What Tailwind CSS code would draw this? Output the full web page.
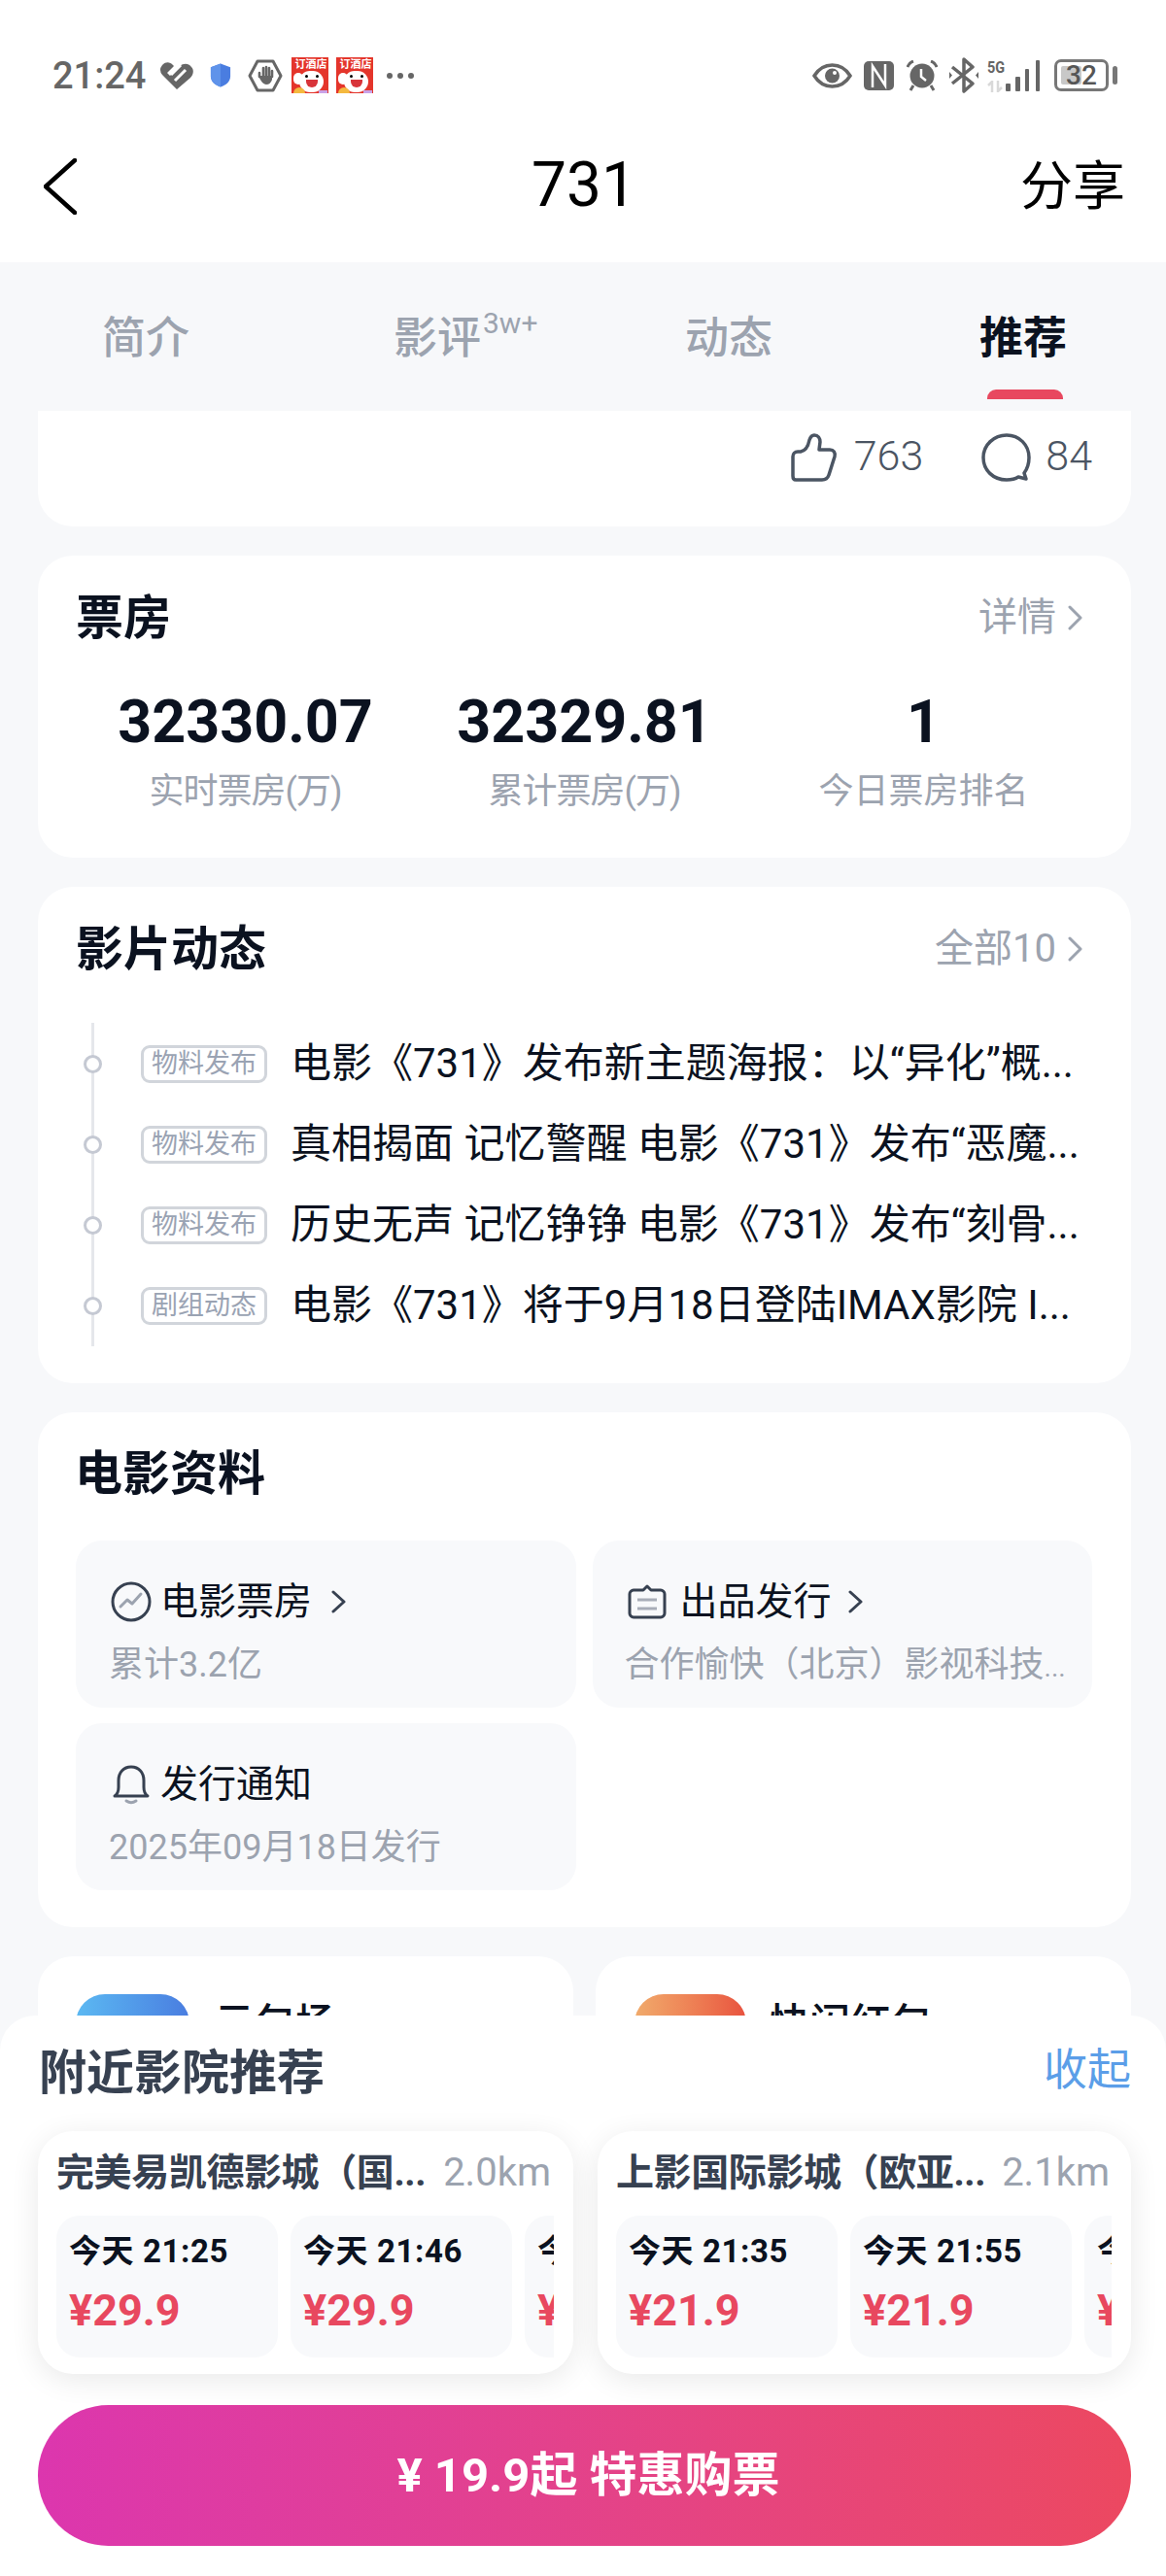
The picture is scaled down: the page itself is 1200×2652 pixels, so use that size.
<!DOCTYPE html>
<html lang="zh">
<head>
<meta charset="utf-8">
<script src="https://cdn.jsdelivr.net/npm/@tailwindcss/browser@4"></script>
</head>
<body class="m-0 font-['Roboto','Noto_Sans_CJK_SC',sans-serif]">
<div class="relative w-[1200px] h-[2652px] overflow-hidden bg-[#f7f8fa]">

  <!-- status bar + nav -->
  <div class="bg-white h-[270px]">
    <div class="h-[120px] flex items-start justify-between pt-[59px] pl-[54px] pr-[50px]">
      <div class="flex items-center h-[37px]">
        <span class="text-[38px] leading-none font-medium text-[#666]">21:24</span>
        <svg class="ml-[14px] w-[36px] h-[30px]" viewBox="0 0 36 30"><path d="M18 29 3 14a8 8 0 0 1 0-10c4-4 8-3 11 0l1 1-7 7 3 3 10-10c4-3 9-3 12 1 3 3 2 8-1 11z" fill="#666"/><path d="M12 14 22 4M16 20 27 9" stroke="#fff" stroke-width="3"/></svg>
        <svg class="ml-[16px] w-[22px] h-[25px]" viewBox="0 0 24 26"><path d="M12 0 23 4v10c0 6-5 10-11 12C6 24 1 20 1 14V4z" fill="#4a7de0"/><path d="M1 4 12 0v26C6 24 1 20 1 14z" fill="#5f93ea"/></svg>
        <svg class="ml-[17px] w-[36px] h-[34px]" viewBox="0 0 36 34"><path d="M10 2h16l8 15-8 15H10L2 17z" fill="none" stroke="#666" stroke-width="3" stroke-linejoin="round"/><path d="M12 18v-4M16 17V9M19 17V8M22 17V9M25 18v-6" fill="none" stroke="#666" stroke-width="2.600" stroke-linecap="round"/><path d="M11 17h14v4c-1 3-3 5-6 5s-6-4-8-9z" fill="#666"/></svg>
        <div class="ml-[9px] relative w-[38px] h-[37px] bg-[#e4352b] overflow-hidden">
          <span class="absolute left-[3px] top-[2px] text-[11px] leading-none font-bold text-white whitespace-nowrap">订酒店</span>
          <span class="absolute left-[8px] top-[14px] w-[25px] h-[22px] rounded-full bg-white"></span>
          <span class="absolute left-[2px] top-[16px] w-[10px] h-[12px] rounded-full bg-white"></span>
          <span class="absolute left-[14px] top-[18px] w-[3px] h-[3px] rounded-full bg-black"></span>
          <span class="absolute left-[25px] top-[18px] w-[3px] h-[3px] rounded-full bg-black"></span>
          <span class="absolute left-[15px] top-[23px] w-[12px] h-[8px] rounded-b-full bg-[#d8343a]"></span>
          <span class="absolute left-[2px] bottom-0 w-[12px] h-[6px] rounded-t-full bg-[#f4b93f]"></span>
          <span class="absolute right-[1px] bottom-0 w-[9px] h-[3px] bg-[#c9a3e8]"></span>
        </div>
        <div class="ml-[8px] relative w-[38px] h-[37px] bg-[#e4352b] overflow-hidden">
          <span class="absolute left-[3px] top-[2px] text-[11px] leading-none font-bold text-white whitespace-nowrap">订酒店</span>
          <span class="absolute left-[8px] top-[14px] w-[25px] h-[22px] rounded-full bg-white"></span>
          <span class="absolute left-[2px] top-[16px] w-[10px] h-[12px] rounded-full bg-white"></span>
          <span class="absolute left-[14px] top-[18px] w-[3px] h-[3px] rounded-full bg-black"></span>
          <span class="absolute left-[25px] top-[18px] w-[3px] h-[3px] rounded-full bg-black"></span>
          <span class="absolute left-[15px] top-[23px] w-[12px] h-[8px] rounded-b-full bg-[#d8343a]"></span>
          <span class="absolute left-[2px] bottom-0 w-[12px] h-[6px] rounded-t-full bg-[#f4b93f]"></span>
          <span class="absolute right-[1px] bottom-0 w-[9px] h-[3px] bg-[#c9a3e8]"></span>
        </div>
        <div class="ml-[14px] flex gap-[5px]">
          <span class="w-[6px] h-[6px] rounded-full bg-[#666]"></span><span class="w-[6px] h-[6px] rounded-full bg-[#666]"></span><span class="w-[6px] h-[6px] rounded-full bg-[#666]"></span>
        </div>
      </div>
      <div class="flex items-center h-[37px]">
        <svg class="w-[41px] h-[26px]" viewBox="0 0 41 26"><path d="M2 13C7 5 13 2 20.500 2S34 5 39 13c-5 8-11 11-18.500 11S7 21 2 13z" fill="none" stroke="#666" stroke-width="3.500"/><circle cx="20.500" cy="13" r="7.500" fill="#666"/><circle cx="23" cy="10" r="2" fill="#fff"/></svg>
        <svg class="ml-[12px] w-[31px] h-[30px]" viewBox="0 0 31 30"><rect width="31" height="30" rx="5" fill="#666"/><path d="M9 27V5l13 20V3" fill="none" stroke="#fff" stroke-width="2.500"/></svg>
        <svg class="ml-[13px] w-[32px] h-[32px]" viewBox="0 0 32 32"><circle cx="16" cy="16" r="12.500" fill="#666"/><path d="M15 9v8l5 4" fill="none" stroke="#fff" stroke-width="2.500"/><path d="M1 7c1-3 3-5 6-6M31 7c-1-3-3-5-6-6M7 26l-3 5M25 26l3 5" fill="none" stroke="#666" stroke-width="3"/></svg>
        <svg class="ml-[12px] w-[30px] h-[37px]" viewBox="0 0 30 37"><path d="M3 10 24 27 15 35V2l9 8L3 27" fill="none" stroke="#666" stroke-width="3.500" stroke-linejoin="round"/><path d="M0 15l3 3.500L0 22zM30 15l-3 3.500L30 22z" fill="#666"/></svg>
        <div class="ml-[9px] w-[19px] h-[34px] flex flex-col justify-between">
          <span class="text-[17px] leading-[16px] font-bold text-[#666] scale-x-[.85] origin-left">5G</span>
          <svg class="w-[17px] h-[12px]" viewBox="0 0 17 12"><path d="M5 12V1L1 5M11 0v11l4-4" fill="none" stroke="#d9d9d9" stroke-width="2.500"/></svg>
        </div>
        <svg class="w-[36px] h-[32px]" viewBox="0 0 36 32"><rect x="0" y="24" width="5" height="8" rx="1" fill="#666"/><rect x="10" y="17" width="5" height="15" rx="1" fill="#666"/><rect x="20" y="9" width="4" height="23" rx="1" fill="#666"/><rect x="31" y="0" width="4" height="32" rx="1" fill="#666"/></svg>
        <div class="ml-[14px] relative w-[56px] h-[33px] rounded-[7px] border-[3px] border-[#777]">
          <span class="absolute left-[4px] top-[4px] bottom-[4px] w-[21px] rounded-[2px] bg-[#c8c8c8]"></span>
          <span class="absolute inset-0 flex items-center justify-center text-[28px] leading-none font-medium text-[#555]">32</span>
        </div>
        <span class="ml-[4px] w-[5px] h-[19px] rounded-full bg-[#777]"></span>
      </div>
    </div>
    <div class="h-[150px] relative flex items-center justify-between pl-[45px] pr-[42px] pb-[6px]">
      <svg class="w-[34px] h-[58px]" viewBox="0 0 34 58"><path d="M32 2 2 29l30 27" fill="none" stroke="#000" stroke-width="4.500" stroke-linecap="round" stroke-linejoin="round"/></svg>
      <span class="absolute left-[2px] right-0 text-center text-[64px] leading-none font-[450] text-black -translate-y-[1px]">731</span>
      <span class="text-[54px] leading-none font-normal text-black translate-y-[1px]">分享</span>
    </div>
  </div>

  <!-- tabs -->
  <div class="h-[153px] grid grid-cols-4 text-[45px] leading-none text-[#9ca3af]">
    <div class="flex justify-center pt-[56px]"><span class="font-medium">简介</span></div>
    <div class="flex justify-center pt-[56px]"><span class="relative font-medium">影评<span class="absolute left-[92px] top-[-8px] text-[30px] leading-none font-normal">3w+</span></span></div>
    <div class="flex justify-center pt-[56px]"><span class="font-medium">动态</span></div>
    <div class="relative flex justify-center pt-[56px]"><span class="font-bold text-[#0b1220] translate-x-[3px]">推荐</span><span class="absolute left-[116px] top-[131px] w-[78px] h-[10px] rounded-t-[9px] bg-[#e8485f]"></span></div>
  </div>

  <!-- scroll content -->
  <div class="flex flex-col gap-[30px] pl-[39px] pr-[36px]">
    <div class="h-[119px] rounded-b-[36px] bg-white flex justify-end items-start pt-[23px] pr-[40px] text-[43px] leading-[46px] font-light text-[#4b5563]">
      <svg class="w-[48px] h-[50px]" viewBox="0 0 48 50"><path d="M5 48h27c4 0 6-2 7-5l6-19c1-4-1-7-5-7H29l1-8c0-4-2-7-6-7-3 0-4 2-5 5-1 5-3 11-9 12H7c-3 0-5 2-5 5v20c0 3 1 4 3 4z" fill="none" stroke="#4b5563" stroke-width="3.500" stroke-linejoin="round"/></svg>
      <span class="ml-[17px]">763</span>
      <svg class="ml-[60px] w-[51px] h-[50px]" viewBox="0 0 51 50"><path d="M44 41c3-4 5-9 5-16C49 12 39 2 26 2S2 12 2 25s10 23 24 23c5 0 9-1 12-3l8 2z" fill="none" stroke="#4b5563" stroke-width="3.500" stroke-linejoin="round"/></svg>
      <span class="ml-[15px]">84</span>
    </div>

    <div class="h-[311px] rounded-[36px] bg-white pl-[39px] pr-[39px] pt-[38px]">
      <div class="flex items-center justify-between h-[52px] pr-[10px]">
        <span class="text-[49px] leading-none font-bold text-[#0b1220]">票房</span>
        <span class="flex items-center gap-[12px] text-[40px] leading-none text-[#9ca3af]">详情<svg class="w-[16px] h-[26px]" viewBox="0 0 16 26"><path d="M2 2l11 11L2 24" fill="none" stroke="#9ca3af" stroke-width="3" stroke-linecap="round" stroke-linejoin="round"/></svg></span>
      </div>
      <div class="grid grid-cols-3 mt-[46px] text-center">
        <div><div class="text-[61px] leading-[70px] font-bold text-[#0b1220]">32330.07</div><div class="mt-[16px] text-[36px] leading-[42px] tracking-[-1px] text-[#9ca3af]">实时票房(万)</div></div>
        <div><div class="text-[61px] leading-[70px] font-bold text-[#0b1220]">32329.81</div><div class="mt-[16px] text-[36px] leading-[42px] tracking-[-1px] text-[#9ca3af]">累计票房(万)</div></div>
        <div><div class="text-[61px] leading-[70px] font-bold text-[#0b1220]">1</div><div class="mt-[16px] text-[36px] leading-[42px] text-[#9ca3af]">今日票房排名</div></div>
      </div>
    </div>

    <div class="h-[511px] rounded-[36px] bg-white pl-[39px] pr-[39px] pt-[38px]">
      <div class="flex items-center justify-between h-[52px] pr-[10px]">
        <span class="text-[49px] leading-none font-bold text-[#0b1220]">影片动态</span>
        <span class="flex items-center gap-[12px] text-[40px] leading-none text-[#9ca3af]">全部10<svg class="w-[16px] h-[26px]" viewBox="0 0 16 26"><path d="M2 2l11 11L2 24" fill="none" stroke="#9ca3af" stroke-width="3" stroke-linecap="round" stroke-linejoin="round"/></svg></span>
      </div>
      <div class="relative mt-[50px] h-[333px]">
        <span class="absolute left-[16px] top-0 bottom-0 w-[3px] bg-[#e5e7eb]"></span>
        <div class="flex flex-col gap-[44px] pt-[23px] pl-[67px]">
          <div class="relative flex items-center h-[39px]">
            <span class="absolute left-[-59px] top-[10px] w-[19px] h-[19px] rounded-full border-[3.5px] border-[#c5c9d3] bg-white"></span>
            <span class="shrink-0 w-[130px] h-[39px] rounded-[9px] border-[3px] border-[#d1d5db] flex items-center justify-center text-[27px] leading-none text-[#9aa3b3]">物料发布</span>
            <span class="ml-[24px] -translate-y-[1px] whitespace-nowrap text-[42px] leading-[50px] text-[#0b1220]">电影《731》发布新主题海报：以“异化”概...</span>
          </div>
          <div class="relative flex items-center h-[39px]">
            <span class="absolute left-[-59px] top-[10px] w-[19px] h-[19px] rounded-full border-[3.5px] border-[#c5c9d3] bg-white"></span>
            <span class="shrink-0 w-[130px] h-[39px] rounded-[9px] border-[3px] border-[#d1d5db] flex items-center justify-center text-[27px] leading-none text-[#9aa3b3]">物料发布</span>
            <span class="ml-[24px] -translate-y-[1px] whitespace-nowrap text-[42px] leading-[50px] text-[#0b1220]">真相揭面 记忆警醒 电影《731》发布“恶魔...</span>
          </div>
          <div class="relative flex items-center h-[39px]">
            <span class="absolute left-[-59px] top-[10px] w-[19px] h-[19px] rounded-full border-[3.5px] border-[#c5c9d3] bg-white"></span>
            <span class="shrink-0 w-[130px] h-[39px] rounded-[9px] border-[3px] border-[#d1d5db] flex items-center justify-center text-[27px] leading-none text-[#9aa3b3]">物料发布</span>
            <span class="ml-[24px] -translate-y-[1px] whitespace-nowrap text-[42px] leading-[50px] text-[#0b1220]">历史无声 记忆铮铮 电影《731》发布“刻骨...</span>
          </div>
          <div class="relative flex items-center h-[39px]">
            <span class="absolute left-[-59px] top-[10px] w-[19px] h-[19px] rounded-full border-[3.5px] border-[#c5c9d3] bg-white"></span>
            <span class="shrink-0 w-[130px] h-[39px] rounded-[9px] border-[3px] border-[#d1d5db] flex items-center justify-center text-[27px] leading-none text-[#9aa3b3]">剧组动态</span>
            <span class="ml-[24px] -translate-y-[1px] whitespace-nowrap text-[42px] leading-[50px] text-[#0b1220]">电影《731》将于9月18日登陆IMAX影院 I...</span>
          </div>
        </div>
      </div>
    </div>

    <div class="h-[530px] rounded-[36px] bg-white pl-[39px] pr-[40px] pt-[38px]">
      <div class="-ml-[1px] h-[52px] text-[49px] leading-[52px] font-bold text-[#0b1220]">电影资料</div>
      <div class="grid grid-cols-2 gap-x-[17px] gap-y-[16px] mt-[42px]">
        <div class="h-[172px] rounded-[27px] bg-[#f8f9fb] pl-[36px] pt-[42px]">
          <div class="flex items-center h-[42px] text-[39px] leading-none text-[#0b1220]">
            <svg class="w-[42px] h-[42px]" viewBox="0 0 42 42"><circle cx="21" cy="21" r="19" fill="none" stroke="#374151" stroke-width="3"/><path d="M10 26l7-7 5 4 9-10" fill="none" stroke="#9ca3af" stroke-width="3" stroke-linecap="round" stroke-linejoin="round"/></svg>
            <span class="ml-[9px]">电影票房</span>
            <svg class="ml-[20px] w-[16px] h-[24px]" viewBox="0 0 16 24"><path d="M2 2l11 10L2 22" fill="none" stroke="#374151" stroke-width="3" stroke-linecap="round" stroke-linejoin="round"/></svg>
          </div>
          <div class="mt-[24px] -ml-[2px] text-[36px] leading-[40px] text-[#9ca3af]">累计3.2亿</div>
        </div>
        <div class="h-[172px] rounded-[27px] bg-[#f8f9fb] pl-[36px] pt-[42px]">
          <div class="flex items-center h-[42px] text-[39px] leading-none text-[#0b1220]">
            <svg class="w-[40px] h-[36px]" viewBox="0 0 40 36"><path d="M6 6h10l4-4 4 4h10c2 0 4 2 4 4v20c0 2-2 4-4 4H6c-2 0-4-2-4-4V10c0-2 2-4 4-4z" fill="none" stroke="#374151" stroke-width="3" stroke-linejoin="round"/><path d="M10 16h20M10 25h20" stroke="#a8adb8" stroke-width="3"/></svg>
            <span class="ml-[14px]">出品发行</span>
            <svg class="ml-[17px] w-[16px] h-[24px]" viewBox="0 0 16 24"><path d="M2 2l11 10L2 22" fill="none" stroke="#374151" stroke-width="3" stroke-linecap="round" stroke-linejoin="round"/></svg>
          </div>
          <div class="mt-[24px] -ml-[3px] whitespace-nowrap text-[36px] leading-[40px] text-[#9ca3af]">合作愉快（北京）影视科技<span class="text-[28px]">...</span></div>
        </div>
        <div class="h-[172px] rounded-[27px] bg-[#f8f9fb] pl-[36px] pt-[42px]">
          <div class="flex items-center h-[42px] text-[39px] leading-none text-[#0b1220]">
            <svg class="w-[42px] h-[42px]" viewBox="0 0 42 42"><path d="M4 33c3-2 4-5 4-9v-7C8 9 13 3 21 3s13 6 13 14v7c0 4 1 7 4 9z" fill="none" stroke="#374151" stroke-width="3" stroke-linejoin="round"/><path d="M16 38c3 2 7 2 10 0" fill="none" stroke="#9ca3af" stroke-width="3" stroke-linecap="round"/></svg>
            <span class="ml-[9px]">发行通知</span>
          </div>
          <div class="mt-[24px] -ml-[2px] text-[36px] leading-[40px] text-[#9ca3af]">2025年09月18日发行</div>
        </div>
      </div>
    </div>

    <div class="grid grid-cols-2 gap-x-[23px] h-[200px]">
      <div class="rounded-[36px] bg-white pl-[39px] pt-[39px] flex gap-[25px]">
        <span class="w-[117px] h-[117px] rounded-[30px] bg-gradient-to-r from-[#5cb9f2] to-[#4a7de0]"></span>
        <span class="mt-[6px] text-[42px] leading-[50px] font-medium text-[#0b1220]">云包场</span>
      </div>
      <div class="rounded-[36px] bg-white pl-[40px] pt-[39px] flex gap-[23px]">
        <span class="w-[115px] h-[117px] rounded-[30px] bg-gradient-to-r from-[#f0ab6c] to-[#e8523f]"></span>
        <span class="mt-[6px] text-[42px] leading-[50px] font-medium text-[#0b1220]">快闪红包</span>
      </div>
    </div>
  </div>

  <!-- bottom sheet -->
  <div class="absolute left-0 right-0 bottom-0 h-[577px] rounded-t-[36px] bg-white pl-[39px] pr-[36px]">
    <div class="flex items-center justify-between h-[119px]">
      <span class="text-[49px] leading-none font-bold text-[#374151] ml-[1px]">附近影院推荐</span>
      <span class="text-[45px] leading-none text-[#5b9ee8] -translate-y-[3px]">收起</span>
    </div>
    <div class="grid grid-cols-[551px_549px] gap-x-[25px] h-[250px]">
      <div class="rounded-[36px] bg-white shadow-[0_6px_30px_rgba(0,0,0,0.09)] pl-[19px] pt-[21px] overflow-hidden">
        <div class="flex items-center justify-between h-[44px] pr-[23px]">
          <span class="text-[39px] leading-none font-bold tracking-[-0.4px] text-[#374151] whitespace-nowrap">完美易凯德影城（国...</span>
          <span class="text-[40px] leading-none text-[#9ca3af]">2.0km</span>
        </div>
        <div class="mt-[22px] w-[512px] flex gap-[13px] overflow-hidden">
          <div class="shrink-0 w-[228px] h-[146px] rounded-[24px] bg-[#f8f9fb] pl-[13px] pt-[19px]"><div class="text-[33px] leading-[36px] font-bold text-[#0b1220] tracking-[0.6px]">今天 21:25</div><div class="mt-[19px] text-[45px] leading-[48px] font-bold text-[#e8485f]">¥29.9</div></div>
          <div class="shrink-0 w-[228px] h-[146px] rounded-[24px] bg-[#f8f9fb] pl-[13px] pt-[19px]"><div class="text-[33px] leading-[36px] font-bold text-[#0b1220] tracking-[0.6px]">今天 21:46</div><div class="mt-[19px] text-[45px] leading-[48px] font-bold text-[#e8485f]">¥29.9</div></div>
          <div class="shrink-0 w-[228px] h-[146px] rounded-[24px] bg-[#f8f9fb] pl-[13px] pt-[19px]"><div class="text-[33px] leading-[36px] font-bold text-[#0b1220] tracking-[0.6px]">今天 22:05</div><div class="mt-[19px] text-[45px] leading-[48px] font-bold text-[#e8485f]">¥29.9</div></div>
        </div>
      </div>
      <div class="rounded-[36px] bg-white shadow-[0_6px_30px_rgba(0,0,0,0.09)] pl-[19px] pt-[21px] overflow-hidden">
        <div class="flex items-center justify-between h-[44px] pr-[22px]">
          <span class="text-[39px] leading-none font-bold tracking-[-0.4px] text-[#374151] whitespace-nowrap">上影国际影城（欧亚...</span>
          <span class="text-[40px] leading-none text-[#9ca3af]">2.1km</span>
        </div>
        <div class="mt-[22px] w-[510px] flex gap-[13px] overflow-hidden">
          <div class="shrink-0 w-[228px] h-[146px] rounded-[24px] bg-[#f8f9fb] pl-[13px] pt-[19px]"><div class="text-[33px] leading-[36px] font-bold text-[#0b1220] tracking-[0.6px]">今天 21:35</div><div class="mt-[19px] text-[45px] leading-[48px] font-bold text-[#e8485f]">¥21.9</div></div>
          <div class="shrink-0 w-[228px] h-[146px] rounded-[24px] bg-[#f8f9fb] pl-[13px] pt-[19px]"><div class="text-[33px] leading-[36px] font-bold text-[#0b1220] tracking-[0.6px]">今天 21:55</div><div class="mt-[19px] text-[45px] leading-[48px] font-bold text-[#e8485f]">¥21.9</div></div>
          <div class="shrink-0 w-[228px] h-[146px] rounded-[24px] bg-[#f8f9fb] pl-[13px] pt-[19px]"><div class="text-[33px] leading-[36px] font-bold text-[#0b1220] tracking-[0.6px]">今天 22:15</div><div class="mt-[19px] text-[45px] leading-[48px] font-bold text-[#e8485f]">¥21.9</div></div>
        </div>
      </div>
    </div>
    <div class="mt-[32px] h-[145px] rounded-full bg-gradient-to-r from-[#dc36ae] to-[#ec4860] flex items-center justify-center text-[49px] leading-none font-bold text-white"><span class="translate-x-[4px]">¥ 19.9起 特惠购票</span></div>
  </div>
</div>
</body>
</html>
